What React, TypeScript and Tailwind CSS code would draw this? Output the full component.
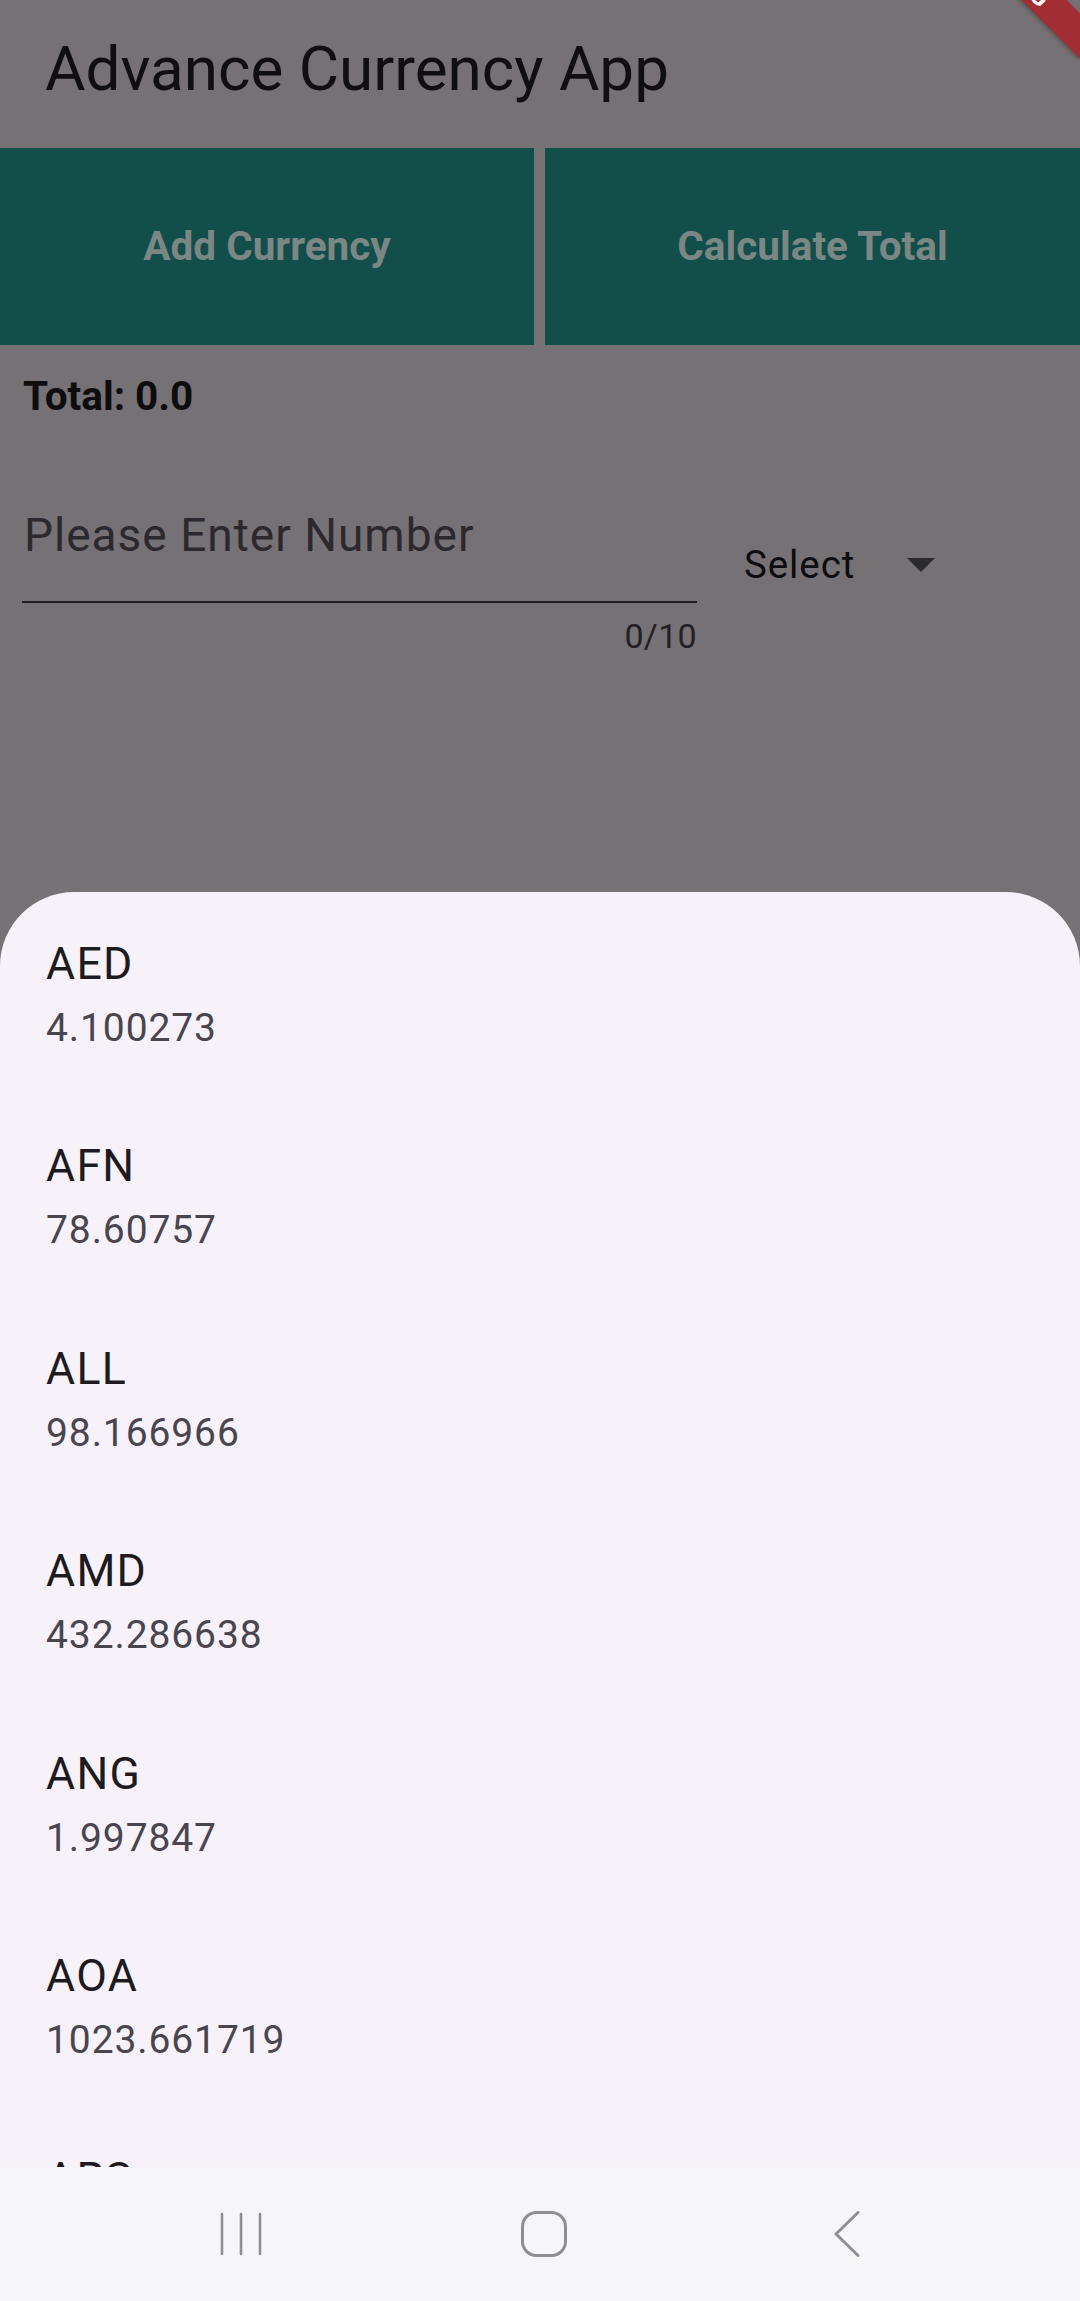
import React from "react";

const rates = [
  { code: "AED", value: "4.100273" },
  { code: "AFN", value: "78.60757" },
  { code: "ALL", value: "98.166966" },
  { code: "AMD", value: "432.286638" },
  { code: "ANG", value: "1.997847" },
  { code: "AOA", value: "1023.661719" },
  { code: "ARS", value: "349.950000" },
];

const App = () => {
  return (
    <div className="relative w-[1080px] h-[2301px] overflow-hidden flex flex-col bg-[#757175] font-['Roboto',sans-serif]">
      {/* page behind the scrim */}
      <div className="flex-1 flex flex-col">
        {/* App bar */}
        <div className="h-[147.5px] flex items-center pl-[45px] pb-[10px]">
          <h1 className="text-[62px] leading-[70px] text-[#0f0e10]">
            Advance Currency App
          </h1>
        </div>

        {/* Action buttons */}
        <div className="flex gap-[11px] h-[197.5px]">
          <button className="w-[534px] h-full bg-[#124e4a] text-[#7b8784] text-[40.5px] font-bold">
            Add Currency
          </button>
          <button className="flex-1 h-full bg-[#124e4a] text-[#7b8784] text-[40.5px] font-bold">
            Calculate Total
          </button>
        </div>

        <p className="mt-[28px] pl-[23px] text-[40.5px] leading-[46px] font-bold text-[#0e0d0e]">
          Total: 0.0
        </p>

        {/* Input row */}
        <div className="flex items-start mt-[89px] pl-[22px]">
          <div className="w-[675px]">
            <div className="pl-[2px] pb-[38.5px] border-b-[2.6px] border-[#221f24] text-[46px] leading-[54px] tracking-[1px] text-[#2b292d]">
              Please Enter Number
            </div>
            <div className="mt-[13px] text-right text-[34px] leading-[40px] tracking-[0.3px] text-[#222024]">
              0/10
            </div>
          </div>
          <div className="ml-[47px] mt-[34.4px] flex items-center">
            <span className="text-[38.5px] leading-[46px] tracking-[0.9px] text-[#0d0c0f]">
              Select
            </span>
            <svg
              className="ml-[52px]"
              width="28"
              height="14"
              viewBox="0 0 28 14"
            >
              <polygon points="0,0 28,0 14,14" fill="#2b2a2c" />
            </svg>
          </div>
        </div>
      </div>

      {/* Bottom sheet with currency list */}
      <div className="absolute left-0 right-0 top-[892px] bottom-[134px] bg-[#f7f2fa] rounded-t-[74px] overflow-hidden">
        {rates.map((r) => (
          <div
            key={r.code}
            className="h-[202.5px] pt-[38.5px] pl-[46px] flex flex-col"
          >
            <span className="text-[44.6px] leading-[66px] tracking-[1.3px] text-[#1d1b20]">
              {r.code}
            </span>
            <span className="mt-[4px] text-[39px] leading-[55px] tracking-[0.9px] text-[#49454f]">
              {r.value}
            </span>
          </div>
        ))}
      </div>

      {/* System navigation bar */}
      <div className="relative h-[134px] bg-[#f6f6f8] flex items-center justify-center gap-[243px] pl-[8px]">
        <svg width="60" height="46" viewBox="0 0 60 46">
          <g stroke="#8f8f92" strokeWidth="2.6" strokeLinecap="round">
            <line x1="11" y1="3" x2="11" y2="43" />
            <line x1="30" y1="3" x2="30" y2="43" />
            <line x1="49" y1="3" x2="49" y2="43" />
          </g>
        </svg>
        <svg width="60" height="46" viewBox="0 0 60 46">
          <rect
            x="8.5"
            y="1.5"
            width="43"
            height="43"
            rx="14"
            fill="none"
            stroke="#8f8f92"
            strokeWidth="3"
          />
        </svg>
        <svg width="60" height="46" viewBox="0 0 60 46">
          <polyline
            points="41,1.5 19,23 41,44.5"
            fill="none"
            stroke="#8f8f92"
            strokeWidth="3"
            strokeLinecap="round"
            strokeLinejoin="round"
          />
        </svg>
      </div>

      {/* Debug ribbon, mostly cut off by the top edge */}
      <div className="absolute left-[975px] top-[-17px] w-[210px] h-[31.5px] bg-[#a22d32] origin-[105px_-73.5px] rotate-45 flex items-center justify-center text-white text-[26px] font-bold leading-none shadow-[0_2px_4px_rgba(0,0,0,0.25)]">
        DEBUG
      </div>
    </div>
  );
};

export default App;
